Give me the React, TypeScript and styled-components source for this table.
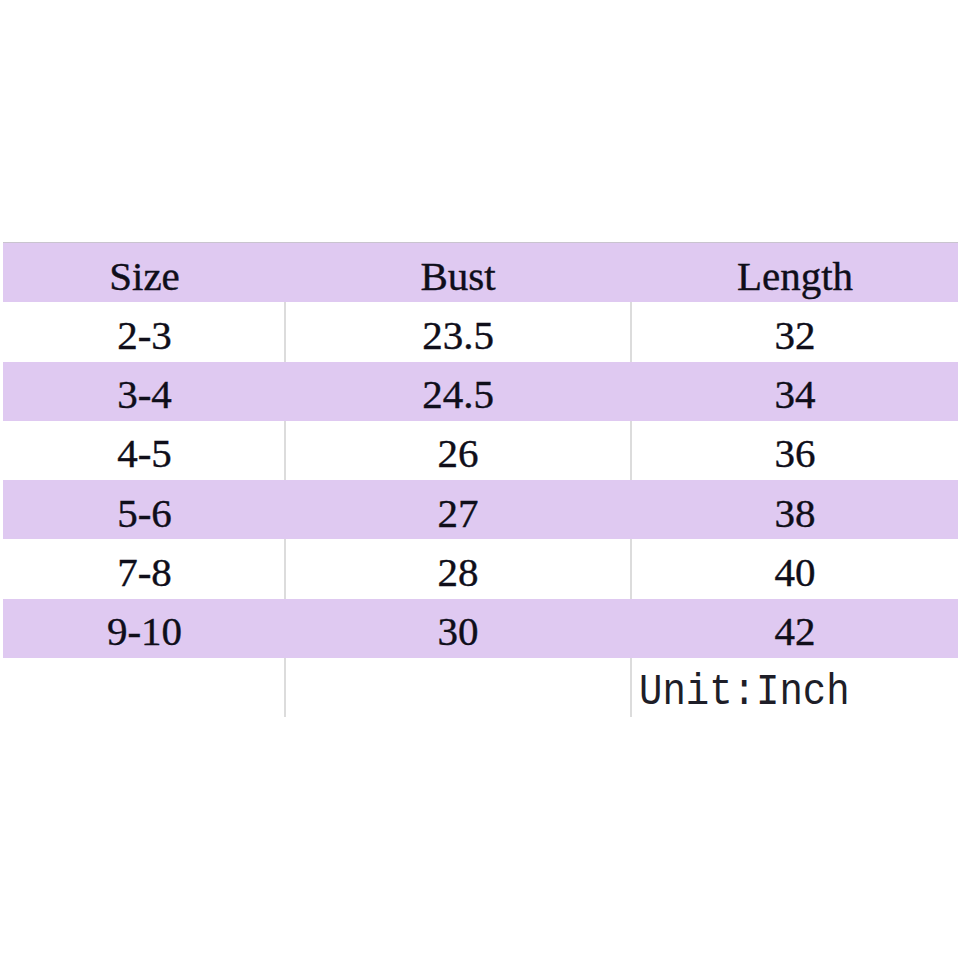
import React from 'react';
import styled, { createGlobalStyle } from 'styled-components';

const GlobalStyle = createGlobalStyle`
  html, body {
    margin: 0;
    padding: 0;
    background: #ffffff;
  }
`;

const Page = styled.div`
  width: 960px;
  height: 960px;
  padding-top: 242px;
  padding-left: 3px;
  box-sizing: border-box;
  background: #ffffff;
`;

const Table = styled.div`
  width: 955px;
  display: flex;
  flex-direction: column;
  border-top: 1px solid #c9c4cf;
`;

const Row = styled.div<{ shaded?: boolean }>`
  display: grid;
  grid-template-columns: 281px 346px 328px;
  height: 59.25px;
  background: ${(props) => (props.shaded ? '#dfc9f1' : '#ffffff')};
`;

const Cell = styled.div<{ divider?: boolean; align?: 'center' | 'left' }>`
  display: flex;
  align-items: center;
  justify-content: ${(props) => (props.align === 'left' ? 'flex-start' : 'center')};
  padding-left: ${(props) => (props.align === 'left' ? '7px' : '0')};
  padding-top: 6px;
  box-sizing: border-box;
  border-left: 2px solid ${(props) => (props.divider ? '#dcdcdc' : 'transparent')};
  font-family: 'Liberation Serif', 'Times New Roman', serif;
  font-size: 41px;
  color: #0f0e1a;
  -webkit-text-stroke: 0.4px #0f0e1a;
`;

const UnitText = styled.span`
  font-family: 'Liberation Mono', 'DejaVu Sans Mono', monospace;
  font-size: 39px;
  color: #1e1e28;
  -webkit-text-stroke: 0;
  display: inline-block;
  margin-top: 6px;
  transform: scaleY(1.12);
`;

const data = [
  ['2-3', '23.5', '32'],
  ['3-4', '24.5', '34'],
  ['4-5', '26', '36'],
  ['5-6', '27', '38'],
  ['7-8', '28', '40'],
  ['9-10', '30', '42'],
];

export default function App() {
  return (
    <>
      <GlobalStyle />
      <Page>
        <Table>
          <Row shaded>
            <Cell>Size</Cell>
            <Cell>Bust</Cell>
            <Cell>Length</Cell>
          </Row>
          {data.map((r, i) => {
            const shaded = i % 2 === 1;
            return (
              <Row key={r[0]} shaded={shaded}>
                <Cell>{r[0]}</Cell>
                <Cell divider={!shaded}>{r[1]}</Cell>
                <Cell divider={!shaded}>{r[2]}</Cell>
              </Row>
            );
          })}
          <Row>
            <Cell />
            <Cell divider />
            <Cell divider align="left">
              <UnitText>Unit:Inch</UnitText>
            </Cell>
          </Row>
        </Table>
      </Page>
    </>
  );
}
